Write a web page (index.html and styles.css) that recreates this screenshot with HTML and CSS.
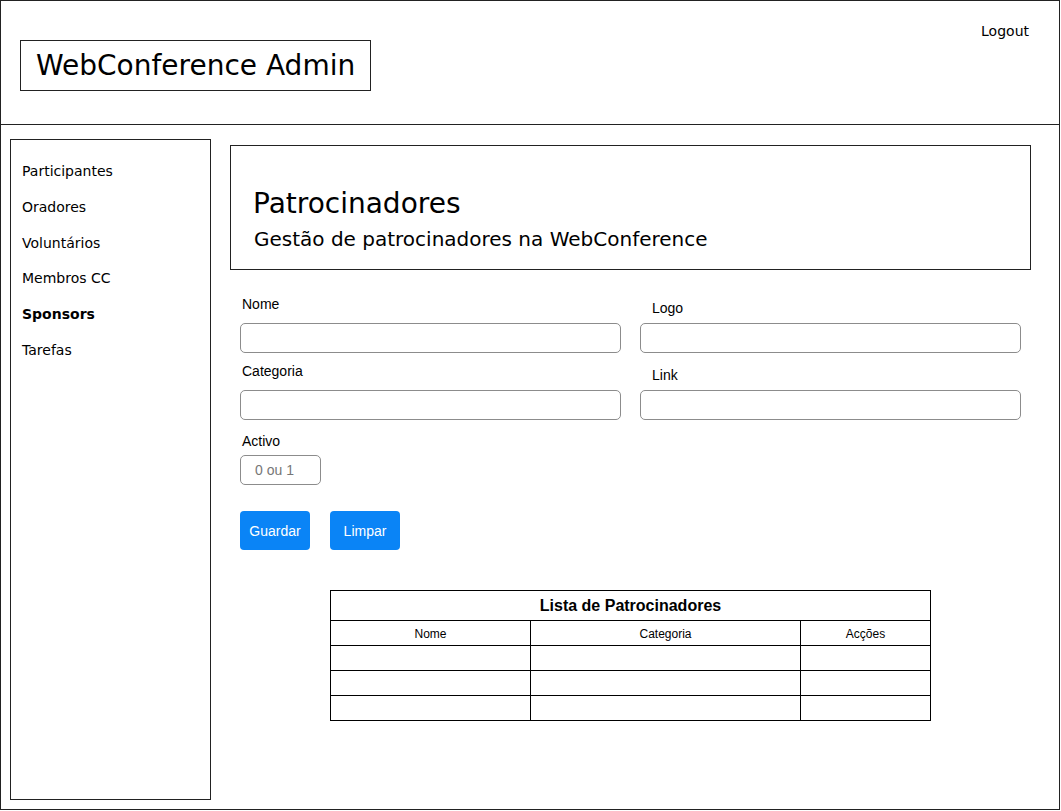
FILE: index.html
```html
<!DOCTYPE html>
<html lang="pt">
<head>
<meta charset="utf-8">
<title>WebConference Admin</title>
<link rel="stylesheet" href="styles.css">
</head>
<body>
<div class="frame">
  <header class="topbar">
    <div class="brand">WebConference Admin</div>
    <a class="logout" href="#">Logout</a>
  </header>
  <div class="layout">
    <nav class="sidebar">
      <a class="nav-item" href="#">Participantes</a>
      <a class="nav-item" href="#">Oradores</a>
      <a class="nav-item" href="#">Voluntários</a>
      <a class="nav-item" href="#">Membros CC</a>
      <a class="nav-item active" href="#">Sponsors</a>
      <a class="nav-item" href="#">Tarefas</a>
    </nav>
    <main class="main">
      <section class="hero">
        <h1 class="hero-title">Patrocinadores</h1>
        <p class="hero-sub">Gestão de patrocinadores na WebConference</p>
      </section>
      <form class="form">
        <div class="grid">
          <div class="field">
            <label class="label">Nome</label>
            <input class="input" type="text">
          </div>
          <div class="field right">
            <label class="label">Logo</label>
            <input class="input" type="text">
          </div>
          <div class="field">
            <label class="label">Categoria</label>
            <input class="input" type="text">
          </div>
          <div class="field right">
            <label class="label">Link</label>
            <input class="input" type="text">
          </div>
        </div>
        <div class="field activo">
          <label class="label">Activo</label>
          <input class="input small" type="text" placeholder="0 ou 1">
        </div>
        <div class="buttons">
          <button class="btn" type="button">Guardar</button>
          <button class="btn" type="button">Limpar</button>
        </div>
      </form>
      <table class="table">
        <colgroup>
          <col class="c1"><col class="c2"><col class="c3">
        </colgroup>
        <thead>
          <tr><th class="caption" colspan="3">Lista de Patrocinadores</th></tr>
          <tr class="head"><th>Nome</th><th>Categoria</th><th>Acções</th></tr>
        </thead>
        <tbody>
          <tr><td></td><td></td><td></td></tr>
          <tr><td></td><td></td><td></td></tr>
          <tr><td></td><td></td><td></td></tr>
        </tbody>
      </table>
    </main>
  </div>
</div>
</body>
</html>
```

FILE: styles.css
```css
* { box-sizing: border-box; }
html, body { margin: 0; padding: 0; background: #fff; }
body { font-family: "DejaVu Sans", Verdana, sans-serif; color: #000; }

.frame {
  width: 1060px;
  height: 810px;
  border: 1.5px solid #222;
  display: flex;
  flex-direction: column;
}

.topbar {
  height: 124px;
  border-bottom: 1.5px solid #222;
  display: flex;
  justify-content: space-between;
  align-items: flex-start;
  padding: 0 30px 0 19px;
  flex: none;
}
.brand {
  margin-top: 38.5px;
  width: 351px;
  height: 51px;
  border: 1.2px solid #222;
  font-size: 28px;
  line-height: 50px;
  padding-left: 15px;
  white-space: nowrap;
}
.logout {
  margin-top: 21px;
  font-size: 14px;
  line-height: 18px;
  color: #000;
  text-decoration: none;
}

.layout {
  display: flex;
  flex: 1;
  align-items: flex-start;
}

.sidebar {
  margin: 14px 0 0 9px;
  width: 201px;
  height: 661px;
  border: 1.2px solid #222;
  padding: 14px 11px;
  display: flex;
  flex-direction: column;
  flex: none;
}
.nav-item {
  font-size: 14px;
  line-height: 35.8px;
  color: #000;
  text-decoration: none;
}
.nav-item.active { font-weight: bold; }

.main {
  margin: 20px 0 0 19px;
  width: 801px;
  flex: none;
}

.hero {
  height: 125px;
  border: 1.2px solid #222;
  padding: 41px 0 0 22px;
}
.hero-title {
  margin: 0;
  font-weight: normal;
  font-size: 28px;
  line-height: 34px;
}
.hero-sub {
  margin: 5px 0 0 1px;
  font-size: 20px;
  line-height: 26px;
}

.form {
  margin: 26px 0 0 10px;
  font-family: "Liberation Sans", Arial, Helvetica, sans-serif;
}
.grid {
  display: grid;
  grid-template-columns: 381px 381px;
  column-gap: 19px;
  row-gap: 10px;
}
.field { display: flex; flex-direction: column; align-items: flex-start; }
.label {
  font-size: 14px;
  line-height: 16px;
  height: 16px;
  margin-bottom: 11px;
  padding-left: 2px;
}
.field.right .label {
  padding-left: 12px;
  margin-top: 4px;
  margin-bottom: 7px;
}
.input {
  width: 100%;
  height: 30px;
  border: 1px solid #8c8c8c;
  border-radius: 5px;
  background: #fff;
  font-family: "Liberation Sans", Arial, sans-serif;
  font-size: 14px;
  padding: 0 14px;
  outline: none;
}
.input.small { width: 81px; }
.input::placeholder { color: #777; }
.activo { margin-top: 13px; }
.label + .input.small { margin-top: -5px; }

.buttons {
  display: flex;
  gap: 20px;
  margin-top: 26px;
}
.btn {
  width: 70px;
  height: 39px;
  border: none;
  border-radius: 4px;
  background: #0a84f6;
  color: #fff;
  font-family: "Liberation Sans", Arial, sans-serif;
  font-size: 14px;
  padding: 0;
}

.table {
  margin: 40px 0 0 100px;
  width: 600px;
  border-collapse: collapse;
  font-family: "Liberation Sans", Arial, sans-serif;
  table-layout: fixed;
}
.c1 { width: 200px; }
.c2 { width: 270px; }
.c3 { width: 130px; }
.table th, .table td {
  border: 1px solid #000;
  padding: 0;
}
.table .caption {
  height: 30px;
  font-size: 16px;
  font-weight: bold;
}
.table .head th {
  height: 25px;
  font-size: 12px;
  font-weight: normal;
  padding-top: 1px;
}
.table td { height: 25px; }
```
